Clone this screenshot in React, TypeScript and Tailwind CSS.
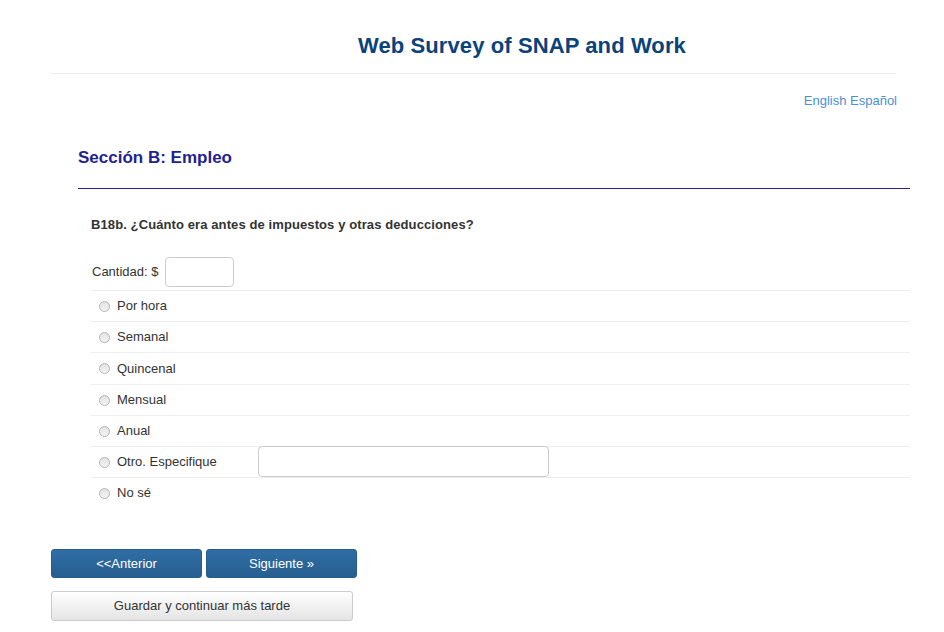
import React from "react";

const options = [
  "Por hora",
  "Semanal",
  "Quincenal",
  "Mensual",
  "Anual",
  "Otro. Especifique",
  "No sé",
];

function Radio() {
  return (
    <span className="inline-block w-[11px] h-[11px] rounded-full border border-[#b5b5b5] bg-gradient-to-b from-[#e2e2e2] to-[#f4f4f4]" />
  );
}

export default function App() {
  return (
    <div className="min-h-screen bg-white text-[#333] font-['Liberation_Sans',Arial,sans-serif] text-[13px]">
      <div className="pl-[51px]">
        {/* Header */}
        <div className="w-[846px]">
          <h1 className="pt-[34px] pl-[307px] text-[22px] leading-[24px] font-bold text-[#0a437a] tracking-[0.1px]">
            Web Survey of SNAP and Work
          </h1>
          <div className="mt-[15px] w-[845px] border-t border-[#eeeeee]" />
          <div className="mt-[18px] text-right leading-[18px] text-[#4a8fd6]">
            <a href="#">English</a> <a href="#">Español</a>
          </div>
        </div>

        {/* Section */}
        <div className="ml-[27px] w-[832px]">
          <h2 className="mt-[38px] pb-[20px] border-b border-[#2320a0] text-[17px] leading-[20px] font-bold text-[#241f91]">
            Sección B: Empleo
          </h2>

          <div className="pl-[13px]">
            <p className="mt-[27px] font-bold leading-[18px] tracking-[0.1px]">
              B18b. ¿Cuánto era antes de impuestos y otras deducciones?
            </p>

            <div className="mt-[23px] flex items-center gap-[6px] pl-px">
              <span>Cantidad: $</span>
              <input className="w-[69px] h-[30px] border border-[#ccc] rounded-[4px] outline-none" />
            </div>

            <div className="mt-[3px]">
              {options.map((o) => (
                <div
                  key={o}
                  className={
                    o === "Quincenal"
                      ? "flex items-center h-[32px] border-t border-[#eeeeee] pl-[8px]"
                      : "flex items-center h-[31px] border-t border-[#eeeeee] pl-[8px]"
                  }
                >
                  <Radio />
                  <span className="ml-[7px] w-[141px]">{o}</span>
                  {o === "Otro. Especifique" && (
                    <input className="w-[291px] h-[31px] mb-[2px] border border-[#ccc] rounded-[4px] outline-none" />
                  )}
                </div>
              ))}
            </div>
          </div>
        </div>

        {/* Buttons */}
        <div className="mt-[41px] flex gap-[4px]">
          <button className="w-[151px] h-[29px] rounded-[3px] border border-[#255d90] bg-gradient-to-b from-[#2f6ea5] to-[#275e90] text-white text-[13px]">
            {"<<Anterior"}
          </button>
          <button className="w-[151px] h-[29px] rounded-[3px] border border-[#255d90] bg-gradient-to-b from-[#2f6ea5] to-[#275e90] text-white text-[13px]">
            Siguiente »
          </button>
        </div>
        <div className="mt-[13px]">
          <button className="w-[302px] h-[30px] rounded-[3px] border border-[#cccccc] bg-gradient-to-b from-white to-[#e4e4e4] text-[#333] text-[13px]">
            Guardar y continuar más tarde
          </button>
        </div>
      </div>
    </div>
  );
}
